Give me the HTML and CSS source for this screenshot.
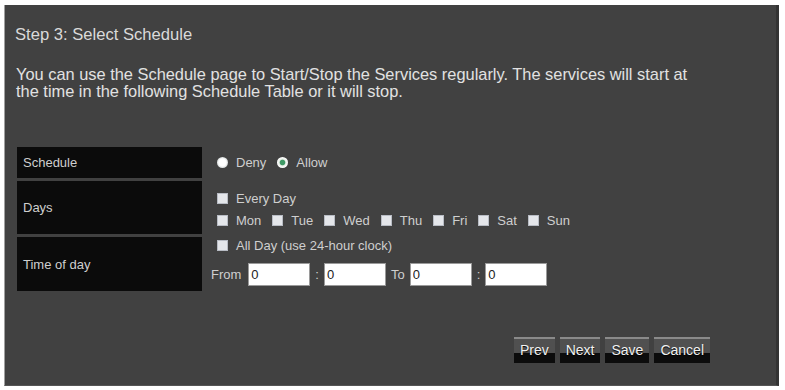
FILE: index.html
```html
<!DOCTYPE html>
<html>
<head>
<meta charset="utf-8">
<link rel="stylesheet" href="styles.css">
</head>
<body>
<div class="panel">
  <div class="step">Step 3: Select Schedule</div>
  <p class="desc">You can use the Schedule page to Start/Stop the Services regularly. The services will start at<br>the time in the following Schedule Table or it will stop.</p>
  <div class="grid">
    <div class="label">Schedule</div>
    <div class="field field-radio">
      <span class="radio"></span><span class="opt">Deny</span>
      <span class="radio radio-on"></span><span class="opt">Allow</span>
    </div>
    <div class="label">Days</div>
    <div class="field field-days">
      <div class="line"><span class="cb"></span><span class="opt">Every Day</span></div>
      <div class="line">
        <span class="cb"></span><span class="opt">Mon</span>
        <span class="cb"></span><span class="opt">Tue</span>
        <span class="cb"></span><span class="opt">Wed</span>
        <span class="cb"></span><span class="opt">Thu</span>
        <span class="cb"></span><span class="opt">Fri</span>
        <span class="cb"></span><span class="opt">Sat</span>
        <span class="cb"></span><span class="opt">Sun</span>
      </div>
    </div>
    <div class="label">Time of day</div>
    <div class="field field-time">
      <div class="line"><span class="cb"></span><span class="opt">All Day (use 24-hour clock)</span></div>
      <div class="line times">
        <span class="from">From</span>
        <input class="tbox" type="text" value="0">
        <span>:</span>
        <input class="tbox" type="text" value="0">
        <span class="to">To</span>
        <input class="tbox" type="text" value="0">
        <span>:</span>
        <input class="tbox" type="text" value="0">
      </div>
    </div>
  </div>
  <div class="buttons">
    <button class="btn">Prev</button>
    <button class="btn">Next</button>
    <button class="btn">Save</button>
    <button class="btn">Cancel</button>
  </div>
</div>
</body>
</html>
```
FILE: styles.css
```css
html, body {
  margin: 0;
  padding: 0;
  background: #ffffff;
}
body {
  font-family: "Liberation Sans", Arial, sans-serif;
  padding: 5px 0 0 4px;
}
.panel {
  width: 775px;
  height: 381px;
  box-sizing: border-box;
  background: #414141;
  border-left: 1px solid #a0a0a0;
  border-right: 3px solid #333333;
  border-bottom: 1px solid #555;
  padding: 21px 0 0 10px;
  display: flex;
  flex-direction: column;
}
.step {
  font-size: 16.6px;
  line-height: 18px;
  color: #dadada;
}
.desc {
  margin: 22px 0 0 1px;
  font-size: 16.4px;
  line-height: 17px;
  color: #e2e2e2;
  white-space: nowrap;
}
.grid {
  margin: 47px 0 0 2px;
  display: grid;
  grid-template-columns: 185px 1fr;
  grid-template-rows: 31px 53px 54px;
  row-gap: 3px;
  font-size: 13px;
  color: #cfcfcf;
}
.label {
  background: #0b0b0b;
  display: flex;
  align-items: center;
  padding-left: 6px;
}
.field {
  padding-left: 9px;
  display: flex;
  flex-direction: column;
}
.field-radio {
  flex-direction: row;
  align-items: center;
}
.field-days {
  padding-top: 9px;
  gap: 6px;
}
.field-time {
  gap: 10px;
}
.line {
  display: flex;
  align-items: center;
  height: 16px;
}
.radio {
  width: 11px;
  height: 11px;
  border-radius: 50%;
  background: radial-gradient(circle, #ffffff 0 45%, #d8dcdc 70%);
  margin: 0 8px 0 6px;
  box-sizing: border-box;
}
.radio-on {
  background: radial-gradient(circle, #3f9a66 0 30%, #e8efe8 42%, #ffffff 70%);
  margin-left: 11px;
}
.cb {
  width: 11px;
  height: 11px;
  background: #e4e6ea;
  border: 1px solid #b8bcc4;
  box-sizing: border-box;
  margin: 0 8px 0 6px;
}
.field-days .line .cb + .opt {
  margin-right: 5px;
}
.times {
  height: 23px;
  gap: 5px;
}
.from {
  margin-right: 2px;
}
.tbox {
  width: 62px;
  height: 23px;
  box-sizing: border-box;
  border: 1px solid #9a9a9a;
  background: #ffffff;
  font-family: "Liberation Sans", Arial, sans-serif;
  font-size: 13px;
  color: #222;
  padding: 0 2px;
  margin: 0;
}
.buttons {
  margin: 46px 66px 0 0;
  display: flex;
  justify-content: flex-end;
  gap: 5px;
}
.btn {
  height: 26px;
  padding: 0 6px;
  border: none;
  font-family: "Liberation Sans", Arial, sans-serif;
  font-size: 14px;
  color: #f2f2f2;
  text-shadow: 0 1px 1px #000;
  background: linear-gradient(#8a8a8a 0 2px, #505050 2px 62%, #0c0c0c 62%);
}
```
